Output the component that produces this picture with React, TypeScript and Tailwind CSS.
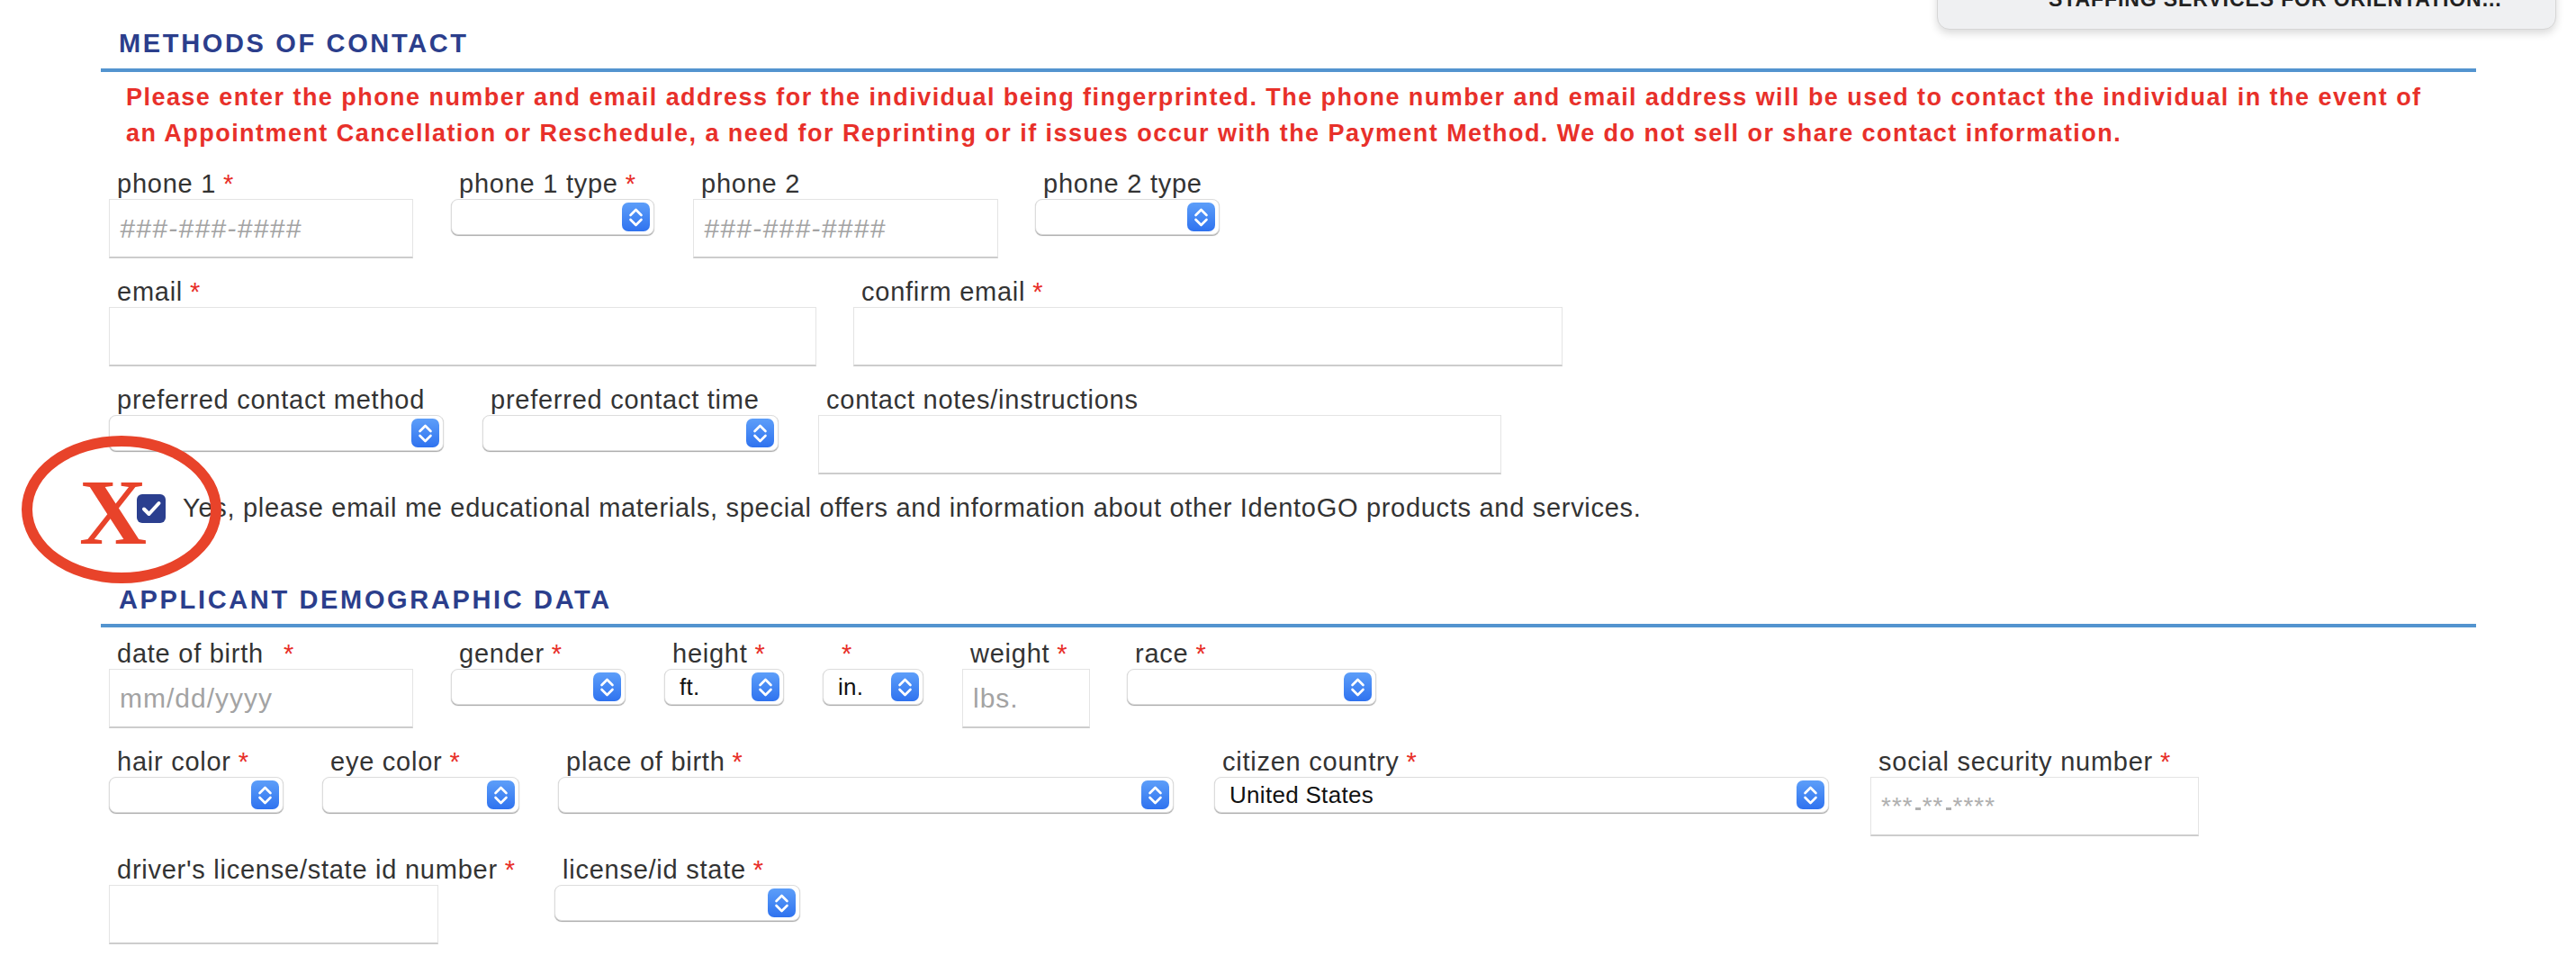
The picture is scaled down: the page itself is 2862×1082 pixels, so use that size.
import React from "react";

const FONT = { fontFamily: '"Liberation Sans", Arial, Helvetica, sans-serif' };

// small blue macOS-style stepper on the right of a select
const Stepper = () => (
  <div className="absolute right-[4px] top-[3px] h-[32px] w-[31px] rounded-[7px] bg-gradient-to-b from-[#5d9ef9] to-[#2f72ef]">
    <svg width="31" height="32" viewBox="0 0 31 32" fill="none">
      <polyline points="9.5,14 15.5,8 21.5,14" stroke="white" strokeWidth="2.6" strokeLinecap="round" strokeLinejoin="round" />
      <polyline points="9.5,19 15.5,25 21.5,19" stroke="white" strokeWidth="2.6" strokeLinecap="round" strokeLinejoin="round" />
    </svg>
  </div>
);

interface LabelProps {
  text: string;
  req?: boolean;
  gap?: string;
  pad?: string;
}

const Label = ({ text, req, gap = "ml-[8px]", pad = "pl-[9px]" }: LabelProps) => (
  <div className={`h-[34px] whitespace-nowrap text-[29px] leading-[34px] tracking-[0.75px] text-[#333333] ${pad}`}>
    {text}
    {req && <span className={`${gap} text-[#e8302a]`}>*</span>}
  </div>
);

const TextBox = ({ placeholder, italic }: { placeholder?: React.ReactNode; italic?: boolean }) => (
  <div
    className={`flex h-[66px] w-full items-center border border-[#e4e4e4] border-b-2 border-b-[#cdcdcd] bg-white pl-[11px] text-[30px] text-[#a3a3a3] ${
      italic ? "italic tracking-[1.3px]" : "tracking-[1px]"
    }`}
  >
    {placeholder}
  </div>
);

const SelectBox = ({ value }: { value?: string }) => (
  <div className="relative flex h-[40px] w-full items-center rounded-[8px] border border-[#dcdcdc] bg-white pl-[16px] text-[26px] tracking-[0.3px] text-[#111] shadow-[0_1px_1px_rgba(0,0,0,0.35)]">
    {value}
    <Stepper />
  </div>
);

const Field = ({ w, ml = "", children }: { w: string; ml?: string; children: React.ReactNode }) => (
  <div className={`shrink-0 ${w} ${ml}`}>{children}</div>
);

const Heading = ({ text, mt }: { text: string; mt: string }) => (
  <div className={`${mt} h-[29px] whitespace-nowrap pl-[20px] text-[29px] font-bold leading-[29px] tracking-[2.65px] text-[#2b3e8c]`}>
    {text}
  </div>
);

const Dash = () => <span className="mx-[2px] inline-block h-[3px] w-[6px] bg-[#b0b0b0] align-[5px]" />;

const ssnMask = (
  <span className="text-[28px] tracking-[1px] text-[#b0b0b0]">
    ***
    <Dash />
    **
    <Dash />
    ****
  </span>
);

export default function App() {
  return (
    <div className="relative h-[1082px] w-[2862px] overflow-hidden bg-white" style={FONT}>
      {/* floating card cut off at the top */}
      <div className="absolute right-[22px] top-[-50px] h-[83px] w-[688px] rounded-[14px] border border-[#d6d6d6] bg-[#eff0f2] pl-[123px] pt-[37px] shadow-[0_4px_10px_rgba(0,0,0,0.15)]">
        <div className="whitespace-nowrap text-[23px] font-semibold leading-[23px] tracking-[0.9px] text-[#222]">
          STAFFING SERVICES FOR ORIENTATION...
        </div>
      </div>

      <div className="pl-[112px]">
        {/* Methods of contact */}
        <Heading text="METHODS OF CONTACT" mt="mt-[34px]" />
        <div className="mt-[13px] h-[4px] w-[2639px] bg-[#5394cf]" />

        <p className="mt-[8px] w-[2700px] whitespace-nowrap pl-[28px] text-[27px] font-bold leading-[40px] tracking-[1.45px] text-[#e8302a]">
          Please enter the phone number and email address for the individual being fingerprinted. The phone number and email
          address will be used to contact the individual in the event of
          <br />
          an Appointment Cancellation or Reschedule, a need for Reprinting or if issues occur with the Payment Method. We do not
          sell or share contact information.
        </p>

        <div className="pl-[9px]">
          {/* phones */}
          <div className="mt-[19px] flex items-start">
            <Field w="w-[338px]">
              <Label text="phone 1" req />
              <TextBox placeholder="###-###-####" italic />
            </Field>
            <Field w="w-[226px]" ml="ml-[42px]">
              <Label text="phone 1 type" req />
              <SelectBox />
            </Field>
            <Field w="w-[339px]" ml="ml-[43px]">
              <Label text="phone 2" />
              <TextBox placeholder="###-###-####" italic />
            </Field>
            <Field w="w-[205px]" ml="ml-[41px]">
              <Label text="phone 2 type" />
              <SelectBox />
            </Field>
          </div>

          {/* email */}
          <div className="mt-[20px] flex items-start">
            <Field w="w-[786px]">
              <Label text="email" req />
              <TextBox />
            </Field>
            <Field w="w-[788px]" ml="ml-[41px]">
              <Label text="confirm email" req />
              <TextBox />
            </Field>
          </div>

          {/* preferences */}
          <div className="mt-[20px] flex items-start">
            <Field w="w-[372px]">
              <Label text="preferred contact method" />
              <SelectBox />
            </Field>
            <Field w="w-[329px]" ml="ml-[43px]">
              <Label text="preferred contact time" />
              <SelectBox />
            </Field>
            <Field w="w-[759px]" ml="ml-[44px]">
              <Label text="contact notes/instructions" />
              <TextBox />
            </Field>
          </div>

          {/* opt-in */}
          <div className="mt-[22px] flex h-[32px] items-center pl-[31px]">
            <div className="flex h-[32px] w-[32px] items-center justify-center rounded-[6px] bg-[#2b3f8f]">
              <svg width="32" height="32" viewBox="0 0 32 32" fill="none">
                <polyline points="8,16.5 13.5,22 24.5,10" stroke="white" strokeWidth="4" strokeLinecap="round" strokeLinejoin="round" />
              </svg>
            </div>
            <span className="ml-[19px] whitespace-nowrap text-[29px] tracking-[0.7px] text-[#333333]">
              Yes, please email me educational materials, special offers and information about other IdentoGO products and services.
            </span>
          </div>
        </div>

        {/* Applicant demographic data */}
        <Heading text="APPLICANT DEMOGRAPHIC DATA" mt="mt-[71px]" />
        <div className="mt-[12px] h-[4px] w-[2639px] bg-[#5394cf]" />

        <div className="pl-[9px]">
          <div className="mt-[12px] flex items-start">
            <Field w="w-[338px]">
              <Label text="date of birth" req gap="ml-[22px]" />
              <TextBox placeholder="mm/dd/yyyy" />
            </Field>
            <Field w="w-[194px]" ml="ml-[42px]">
              <Label text="gender" req />
              <SelectBox />
            </Field>
            <Field w="w-[133px]" ml="ml-[43px]">
              <Label text="height" req />
              <SelectBox value="ft." />
            </Field>
            <Field w="w-[112px]" ml="ml-[43px]">
              <Label text="" req gap="ml-0" pad="pl-[21px]" />
              <SelectBox value="in." />
            </Field>
            <Field w="w-[142px]" ml="ml-[43px]">
              <Label text="weight" req />
              <TextBox placeholder="lbs." />
            </Field>
            <Field w="w-[277px]" ml="ml-[41px]">
              <Label text="race" req />
              <SelectBox />
            </Field>
          </div>

          <div className="mt-[20px] flex items-start">
            <Field w="w-[194px]">
              <Label text="hair color" req />
              <SelectBox />
            </Field>
            <Field w="w-[219px]" ml="ml-[43px]">
              <Label text="eye color" req />
              <SelectBox />
            </Field>
            <Field w="w-[684px]" ml="ml-[43px]">
              <Label text="place of birth" req />
              <SelectBox />
            </Field>
            <Field w="w-[683px]" ml="ml-[45px]">
              <Label text="citizen country" req />
              <SelectBox value="United States" />
            </Field>
            <Field w="w-[365px]" ml="ml-[46px]">
              <Label text="social security number" req />
              <TextBox placeholder={ssnMask} />
            </Field>
          </div>

          <div className="mt-[20px] flex items-start">
            <Field w="w-[366px]">
              <Label text="driver's license/state id number" req />
              <TextBox />
            </Field>
            <Field w="w-[273px]" ml="ml-[129px]">
              <Label text="license/id state" req />
              <SelectBox />
            </Field>
          </div>
        </div>
      </div>

      {/* red annotation over the opt-in checkbox */}
      <div className="absolute left-[24px] top-[484px] h-[164px] w-[222px] rounded-[50%] border-[12px] border-[#e8432a]" />
      <div
        className="absolute left-[88px] top-[517px] text-[104px] font-bold leading-[104px] text-[#e8432a]"
        style={{ fontFamily: '"Liberation Serif", "Times New Roman", serif' }}
      >
        X
      </div>
    </div>
  );
}
